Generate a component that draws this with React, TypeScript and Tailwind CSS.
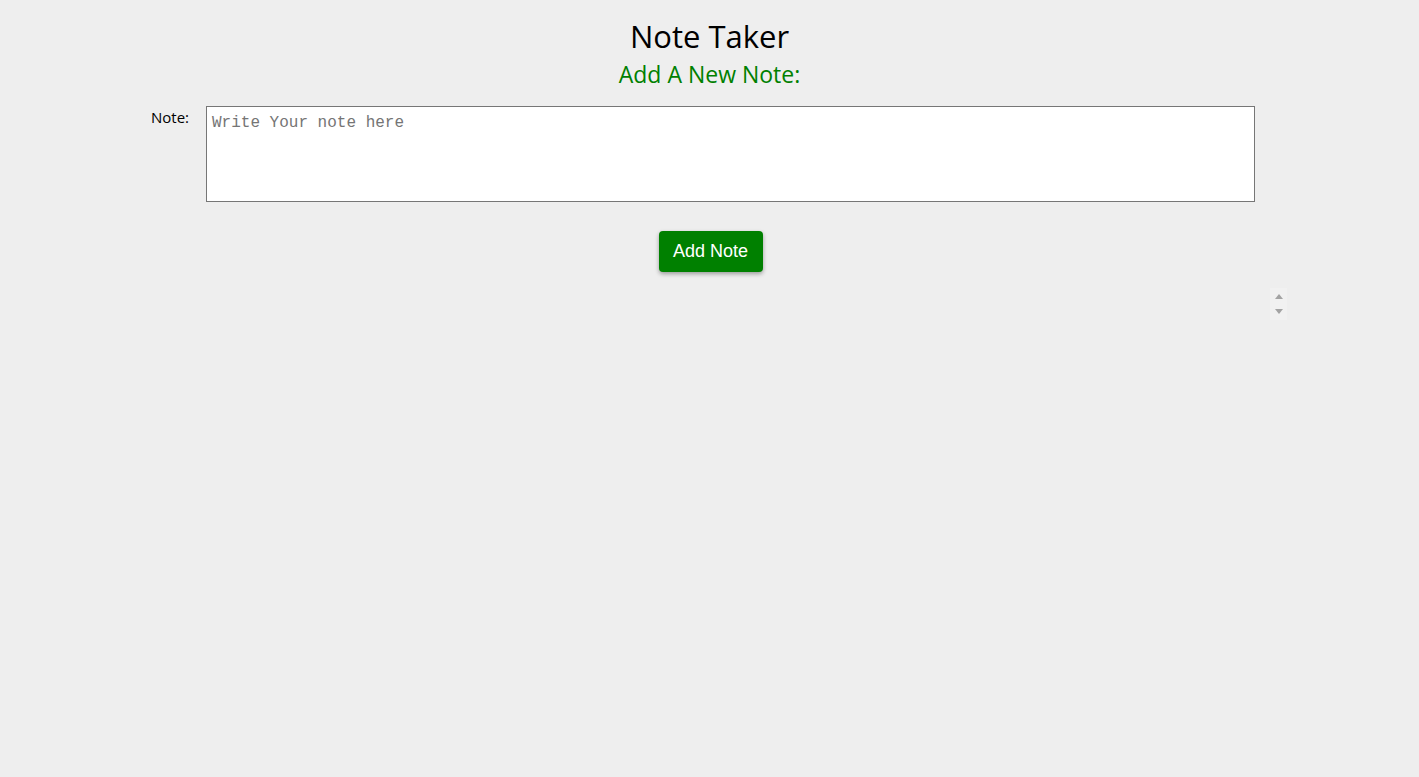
export default function App() {
  return (
    <div className="min-h-[777px] w-full bg-[#eeeeee] font-['Open_Sans',sans-serif]">
      {/* header */}
      <div className="flex flex-col items-center pt-[14px]">
        <h1 className="text-[31px] leading-[44px] text-black">Note Taker</h1>
        <h2 className="text-[23px] leading-[32px] text-[#008000]">Add A New Note:</h2>
      </div>

      {/* note form */}
      <div className="mt-[16px] flex pl-[151px]">
        <label className="w-[55px] pt-[1px] text-[15px] leading-[20px] text-black">Note:</label>
        <textarea
          placeholder="Write Your note here"
          className="h-[96px] w-[1049px] resize-none border border-[#767676] bg-white px-[5px] pt-[6px] pb-[5px] font-['Liberation_Mono',monospace] text-[16px] leading-[20px] placeholder:text-[#757575] focus:outline-none"
        />
      </div>

      <div className="mt-[29px] flex justify-center pl-[2px]">
        <button className="h-[41px] w-[104px] rounded-[4px] bg-[#008000] font-['Liberation_Sans',Arial,sans-serif] text-[18px] text-white shadow-[0_2px_4px_rgba(0,0,0,0.35)]">
          Add Note
        </button>
      </div>

      {/* empty notes list (scrollbar only) */}
      <div className="mt-[16px] flex justify-end pr-[132px]">
        <div className="flex h-[32px] w-[17px] flex-col items-center justify-between bg-[#f1f1f1] py-[6px]">
          <svg width="8" height="5" viewBox="0 0 8 5">
            <path d="M4 0 L8 5 L0 5 Z" fill="#a3a3a3" />
          </svg>
          <svg width="8" height="5" viewBox="0 0 8 5">
            <path d="M0 0 L8 0 L4 5 Z" fill="#a3a3a3" />
          </svg>
        </div>
      </div>
    </div>
  );
}
